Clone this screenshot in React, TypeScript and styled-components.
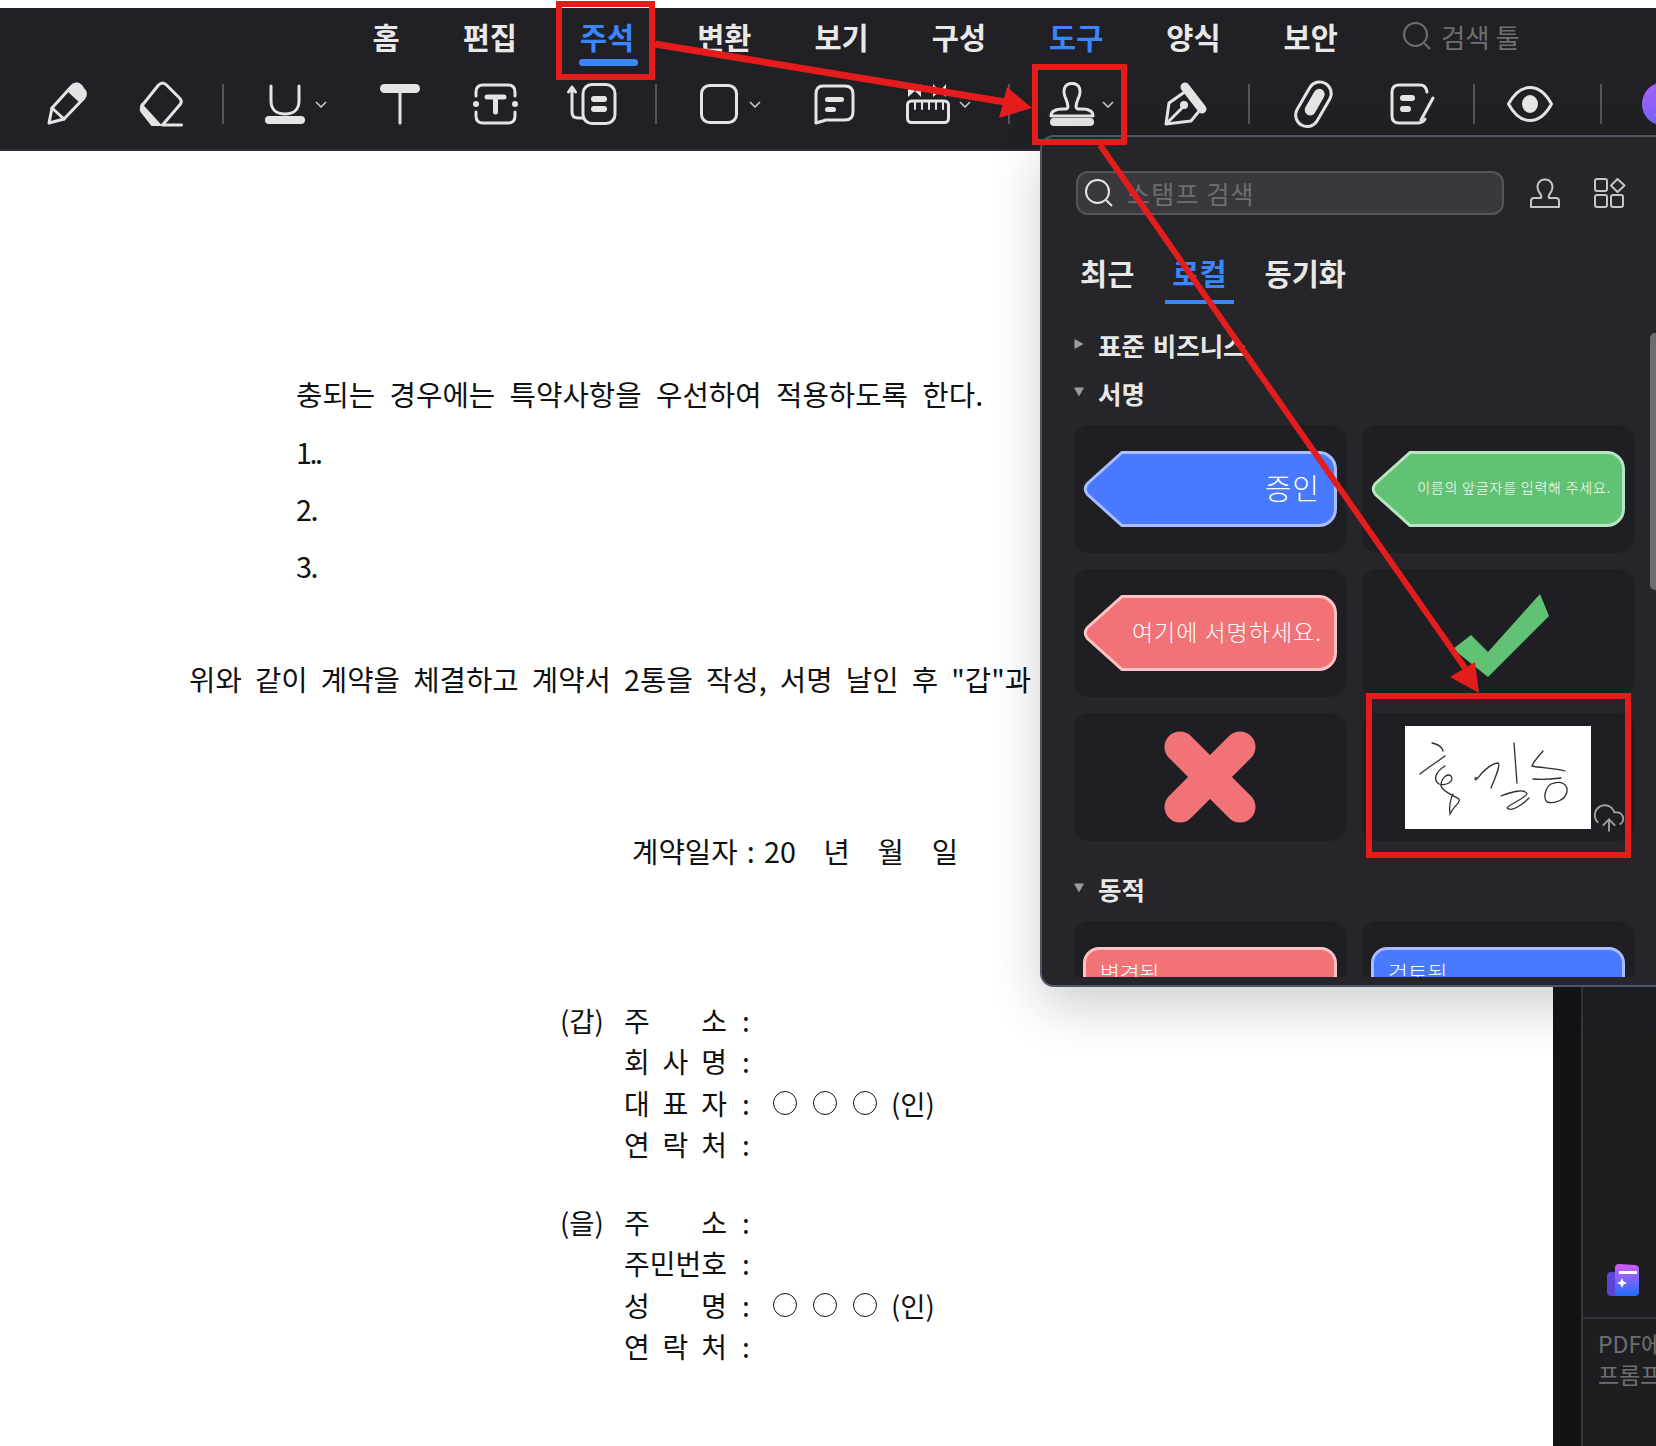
import React from 'react'
import styled, { createGlobalStyle } from 'styled-components'
import { CloudUpload } from 'lucide-react'

const GlobalStyle = createGlobalStyle`
  html, body {
    margin: 0;
    padding: 0;
    background: #fff;
  }
  * {
    box-sizing: border-box;
  }
`

const KR = `"Noto Sans CJK KR", "Noto Sans", sans-serif`
const ICON = '#e4e4e4'
const BLUE = '#3a86ff'
const RED = '#e41c1c'

const Page = styled.div`
  position: relative;
  width: 1656px;
  height: 1446px;
  padding-top: 8px;
  overflow: hidden;
  background: #fff;
  font-family: ${KR};
  display: flex;
  flex-direction: column;
`

/* top toolbar */

const Toolbar = styled.header`
  flex: none;
  height: 143px;
  background: #202025;
  border-bottom: 2px solid #2e2e33;
  color: #e6e6e6;
`

const TabRow = styled.nav`
  display: flex;
  align-items: center;
  gap: 63px;
  height: 58px;
  padding: 9px 0 11px 372.5px;
`

const MenuTab = styled.div<{ $active?: boolean; $line?: boolean }>`
  position: relative;
  font-size: 29.5px;
  line-height: 36px;
  font-weight: 700;
  color: ${(p) => (p.$active ? BLUE : '#e8e8e8')};

  &::after {
    content: '';
    display: ${(p) => (p.$line ? 'block' : 'none')};
    position: absolute;
    left: -1px;
    right: -4px;
    top: 41px;
    height: 7px;
    border-radius: 4px;
    background: ${BLUE};
  }
`

const ToolSearch = styled.div`
  display: flex;
  align-items: center;
  gap: 9px;
  margin-left: 1px;
  font-size: 26.5px;
  color: #6e6e72;
  svg {
    width: 30px;
    height: 30px;
  }
`

const ToolRow = styled.div`
  display: flex;
  align-items: center;
  height: 46px;
  margin-top: 15px;
  padding-left: 45px;
`

const Tool = styled.svg<{ $w: number; $h?: number; $gap?: number }>`
  flex: none;
  width: ${(p) => p.$w}px;
  height: ${(p) => p.$h ?? 42}px;
  margin-left: ${(p) => p.$gap ?? 0}px;
  overflow: visible;
  fill: none;
  stroke: ${ICON};
  stroke-width: 3;
  stroke-linecap: round;
  stroke-linejoin: round;
  .solid {
    fill: ${ICON};
    stroke: none;
  }
`

const Sep = styled.div<{ $gap: number }>`
  flex: none;
  width: 2px;
  height: 40px;
  margin-left: ${(p) => p.$gap}px;
  background: #55555a;
`

const Chevron = styled.svg<{ $gap: number }>`
  flex: none;
  width: 12px;
  height: 7px;
  margin-left: ${(p) => p.$gap}px;
  fill: none;
  stroke: #c9c9cc;
  stroke-width: 1.6;
`

const AiBadge = styled.div`
  flex: none;
  width: 44px;
  height: 44px;
  margin-left: 40px;
  border-radius: 50%;
  background: linear-gradient(135deg, #b05cf5, #4a6cf7);
  color: #fff;
  font-size: 26px;
  font-weight: 700;
  font-style: italic;
  line-height: 44px;
  text-align: center;
`

/* document area */

const Body = styled.main`
  flex: 1;
  min-height: 0;
  display: flex;
`

const Sheet = styled.section`
  flex: none;
  width: 1553px;
  padding-top: 223px;
  background: #fff;
  color: #111;
  overflow: hidden;
`

const DocLine = styled.p<{ $left: number; $top?: number; $spread?: number; $track?: number }>`
  margin: ${(p) => p.$top ?? 0}px 0 0 ${(p) => p.$left}px;
  height: 40px;
  font-size: 28.7px;
  line-height: 40px;
  white-space: pre;
  word-spacing: ${(p) => p.$spread ?? 6.7}px;
  letter-spacing: ${(p) => p.$track ?? 0}px;
`

const PartyBlock = styled.div<{ $top: number }>`
  margin: ${(p) => p.$top}px 0 0 560px;
`

const PartyRow = styled.div`
  display: grid;
  grid-template-columns: 64px 103px 46px auto;
  height: 41.3px;
  align-items: center;
  font-size: 28px;
  line-height: 41.3px;
`

const PartyTag = styled.span`
  font-size: 27.5px;
`

const PartyLabel = styled.span`
  display: flex;
  justify-content: space-between;
  white-space: nowrap;
`

const PartyColon = styled.span`
  padding-left: 15px;
`

const PartyValue = styled.span`
  display: flex;
  align-items: center;
  gap: 16px;
`

const Ring = styled.i`
  display: block;
  width: 24px;
  height: 24px;
  border: 1.5px solid #111;
  border-radius: 50%;
`

const Seal = styled.span`
  margin-left: -2px;
  font-size: 27.5px;
`

const Gutter = styled.div`
  flex: none;
  width: 28px;
  background: #131316;
`

const Sidebar = styled.aside`
  flex: 1;
  min-width: 0;
  display: flex;
  flex-direction: column;
  background: #1e1e21;
  border-left: 2px solid #36363b;
`

const SideTop = styled.div`
  flex: 1;
  display: flex;
  align-items: flex-end;
  padding: 0 0 21px 24px;
`

const SideInput = styled.div`
  flex: none;
  height: 129px;
  padding: 9px 0 0 15px;
  border-top: 2px solid #333338;
  color: #6e6e72;
  font-size: 23px;
  line-height: 31px;
  white-space: nowrap;
  overflow: hidden;
`

/* stamp dropdown */

const Panel = styled.div`
  position: absolute;
  left: 1040px;
  top: 135px;
  width: 640px;
  height: 852px;
  padding: 34px 0 0 32px;
  background: #25252a;
  border: 2px solid #4f5666;
  border-radius: 14px;
  box-shadow: 0 20px 50px rgba(20, 20, 40, 0.2);
  color: #e8e8e8;
`

const Scrollbar = styled.div`
  position: absolute;
  left: 608px;
  top: 196px;
  width: 10px;
  height: 257px;
  border-radius: 5px;
  background: #6c6c72;
`

const SearchRow = styled.div`
  display: flex;
  align-items: center;
  margin-left: 2px;
`

const SearchBox = styled.div`
  display: flex;
  align-items: center;
  gap: 13px;
  width: 428px;
  height: 44px;
  padding-left: 6px;
  background: #38383e;
  border: 2px solid #55555b;
  border-radius: 12px;
  color: #6d6d72;
  font-size: 25px;
  letter-spacing: 1.2px;
  svg {
    color: #e6e6e6;
    width: 30px;
    height: 30px;
  }
`

const HeadIcon = styled.svg<{ $w: number; $gap: number }>`
  width: ${(p) => p.$w}px;
  height: 30px;
  margin-left: ${(p) => p.$gap}px;
  fill: none;
  stroke: #c3c5cc;
  stroke-width: 2;
  stroke-linejoin: round;
`

const SourceTabs = styled.div`
  display: flex;
  gap: 38px;
  margin: 39px 0 0 6px;
`

const SourceTab = styled.div<{ $active?: boolean }>`
  position: relative;
  font-size: 29.5px;
  line-height: 36px;
  font-weight: 700;
  color: ${(p) => (p.$active ? BLUE : '#e8e8e8')};

  &::after {
    content: '';
    display: ${(p) => (p.$active ? 'block' : 'none')};
    position: absolute;
    left: -7px;
    right: -7px;
    top: 46px;
    height: 4px;
    background: ${BLUE};
  }
`

const StampList = styled.div`
  height: 656px;
  margin-top: 31px;
  overflow: hidden;
`

const SectionRow = styled.div<{ $top?: number }>`
  display: flex;
  align-items: center;
  gap: 14px;
  height: 48px;
  padding-bottom: 2px;
  margin-top: ${(p) => p.$top ?? 0}px;
  font-size: 25.5px;
  font-weight: 700;
  word-spacing: 2px;
`

const Caret = styled.i<{ $open?: boolean }>`
  display: block;
  flex: none;
  width: 10px;
  height: 10px;
  background: #9a9da8;
  clip-path: ${(p) =>
    p.$open ? 'polygon(0 5%, 100% 5%, 50% 95%)' : 'polygon(5% 0, 95% 50%, 5% 100%)'};
`

const CardGrid = styled.div`
  display: grid;
  grid-template-columns: 272px 272px;
  gap: 16px;
  margin-top: 8px;
`

const Card = styled.div`
  position: relative;
  display: flex;
  align-items: center;
  justify-content: center;
  height: 128px;
  border-radius: 16px;
  background: #1f1f23;
`

const TopCard = styled(Card)`
  align-items: flex-start;
  padding-top: 26px;
`

const Stamp = styled.div`
  display: grid;
  width: 254px;
  height: 76px;
  align-items: center;
  justify-items: end;
  & > * {
    grid-area: 1 / 1;
  }
  svg {
    width: 254px;
    height: 76px;
    display: block;
  }
`

const StampText = styled.span<{ $size: number; $right: number; $track?: number }>`
  position: relative;
  margin: 0 ${(p) => p.$right}px 4px 0;
  color: #fff;
  font-size: ${(p) => p.$size}px;
  font-weight: 300;
  letter-spacing: ${(p) => p.$track ?? 0}px;
  white-space: nowrap;
`

const CheckMark = styled.svg`
  margin: 6px 0 0 6px;
`

const DynamicStamp = styled.div<{ $fill: string; $edge: string }>`
  width: 254px;
  height: 76px;
  padding: 8px 0 0 14px;
  border: 3px solid ${(p) => p.$edge};
  border-radius: 16px;
  background: ${(p) => p.$fill};
  color: #fff;
  font-size: 21.5px;
  font-weight: 300;
  line-height: 30px;
`

const SignaturePic = styled.div`
  width: 186px;
  height: 103px;
  background: #fff;
  svg {
    display: block;
    fill: none;
    stroke: #2e2e2e;
    stroke-width: 1.3;
    stroke-linecap: round;
  }
`

const UploadBadge = styled.div`
  position: absolute;
  right: 8px;
  bottom: 6px;
  display: flex;
  color: #a2a2a7;
`

/* red annotations on top of the screenshot */

const Annotations = styled.svg`
  position: absolute;
  left: 0;
  top: 0;
  width: 1656px;
  height: 1446px;
  pointer-events: none;
  fill: none;
  stroke: ${RED};
  stroke-width: 6;
  polygon {
    fill: ${RED};
    stroke: none;
  }
`

const StampShape = ({ fill, edge }: { fill: string; edge: string }) => (
  <svg viewBox="0 0 254 76">
    <path
      d="M39 1.5 H236 A16.5 16.5 0 0 1 252.5 18 V58 A16.5 16.5 0 0 1 236 74.5 H39 L4.5 43.5 Q0 38 4.5 32.5 Z"
      fill={fill}
      stroke={edge}
      strokeWidth="3"
    />
  </svg>
)

const Down = ({ gap }: { gap: number }) => (
  <Chevron $gap={gap} viewBox="0 0 12 7">
    <path d="M1 1 L6 6 L11 1" />
  </Chevron>
)

const Magnifier = () => (
  <svg viewBox="0 0 30 30" width="28" height="28" fill="none" stroke="currentColor" strokeWidth="2">
    <circle cx="13.5" cy="13.5" r="11.5" />
    <path d="M22 22 L28 28" />
  </svg>
)

const Party = ({
  tag,
  label,
  named,
}: {
  tag?: string
  label: string[]
  named?: boolean
}) => (
  <PartyRow>
    <PartyTag>{tag}</PartyTag>
    <PartyLabel>
      {label.map((c, i) => (
        <span key={i}>{c}</span>
      ))}
    </PartyLabel>
    <PartyColon>:</PartyColon>
    {named && (
      <PartyValue>
        <Ring />
        <Ring />
        <Ring />
        <Seal>(인)</Seal>
      </PartyValue>
    )}
  </PartyRow>
)

export default function App() {
  return (
    <Page>
      <GlobalStyle />
      <Toolbar>
        <TabRow>
          <MenuTab>홈</MenuTab>
          <MenuTab>편집</MenuTab>
          <MenuTab $active $line>
            주석
          </MenuTab>
          <MenuTab>변환</MenuTab>
          <MenuTab>보기</MenuTab>
          <MenuTab>구성</MenuTab>
          <MenuTab $active>도구</MenuTab>
          <MenuTab>양식</MenuTab>
          <MenuTab>보안</MenuTab>
          <ToolSearch>
            <Magnifier />
            검색 툴
          </ToolSearch>
        </TabRow>
        <ToolRow>
          <Tool $w={42} viewBox="0 0 40 42">
            <path d="M3 40 L6 25 L25 4 C28 0 32 0 35 3 L37 6 C40 9 40 12 38 15 L18 36 Z" />
            <path className="solid" d="M25 4 C28 0 32 0 35 3 L37 6 C40 9 40 12 38 15 L34 20 L21 8 Z" />
            <path d="M6 25 L18 36" />
          </Tool>
          <Tool $w={45} $h={45} $gap={51} viewBox="0 0 44 45">
            <path d="M4 23 L20 3 Q24 -1 28 3 L41 16 Q44 19 42 22 L24 43 H43" />
            <path className="solid" d="M3 21 L24 44 H13 L2 30 Q0 25 3 21 Z" />
          </Tool>
          <Sep $gap={39} />
          <Tool $w={40} $h={40} $gap={41} viewBox="0 0 40 40">
            <path d="M6 2 V17 C6 26 12 30 20 30 C28 30 34 26 34 17 V2" />
            <rect className="solid" x="0" y="32" width="40" height="8" rx="4" />
          </Tool>
          <Down gap={10} />
          <Tool $w={40} $h={40} $gap={53} viewBox="0 0 40 40">
            <rect className="solid" x="0" y="0" width="40" height="9" rx="4.5" />
            <path d="M20 8 V39" />
          </Tool>
          <Tool $w={45} $gap={53} viewBox="0 0 45 42">
            <path d="M3 13 V9 Q3 2 10 2 H35 Q42 2 42 9 V13" />
            <path d="M3 29 V33 Q3 40 10 40 H35 Q42 40 42 33 V29" />
            <circle className="solid" cx="3" cy="21" r="3" />
            <circle className="solid" cx="42" cy="21" r="3" />
            <path d="M14 14 H31 M22.5 14 V29" strokeWidth="5" />
          </Tool>
          <Tool $w={48} $gap={50} viewBox="0 0 48 42">
            <rect x="15" y="1.5" width="32" height="39" rx="9" />
            <rect className="solid" x="23" y="13" width="16" height="6" rx="3" />
            <rect className="solid" x="23" y="23" width="16" height="6" rx="3" />
            <path d="M15 35 H10 Q4 35 4 29 V5 M0.5 9 L4 4 L7.5 9" />
          </Tool>
          <Sep $gap={39} />
          <Tool $w={38} $h={40} $gap={43} viewBox="0 0 38 40">
            <rect x="1.5" y="1.5" width="35" height="37" rx="8" />
          </Tool>
          <Down gap={11} />
          <Tool $w={42} $h={40} $gap={52} viewBox="0 0 42 40">
            <path d="M10 2 H32 Q40 2 40 10 V28 Q40 36 32 36 H13 L3 39 V10 Q3 2 10 2 Z" />
            <rect className="solid" x="12" y="13" width="19" height="5" rx="2.5" />
            <rect className="solid" x="12" y="23" width="11" height="5" rx="2.5" />
          </Tool>
          <Tool $w={44} $h={40} $gap={51} viewBox="0 0 44 40">
            <rect x="1.5" y="17" width="41" height="21.5" rx="4" />
            <path d="M9 18 V25 M16 18 V25 M23 18 V25 M30 18 V25 M37 18 V25" strokeWidth="2" />
            <polygon className="solid" points="2,0 9,7 2,13" />
            <polygon className="solid" points="15,0 9,7 15,13" />
            <polygon className="solid" points="27,0 34,7 27,13" />
            <polygon className="solid" points="40,0 34,7 40,13" />
          </Tool>
          <Down gap={9} />
          <Sep $gap={37} />
          <Tool $w={46} $h={44} $gap={39} viewBox="0 0 46 44">
            <path d="M14 27 H17 C20 27 19 22 17 17 C13 9 15 1.5 23 1.5 C31 1.5 33 9 29 17 C27 22 26 27 29 27 H33 C40 27 44 29 44 34 H2 C2 29 7 27 14 27 Z" />
            <rect className="solid" x="1" y="36" width="44" height="8" rx="4" />
          </Tool>
          <Down gap={7} />
          <Tool $w={44} $h={44} $gap={50} viewBox="0 0 44 44">
            <path d="M2 42 L5 21 L22 9 L36 28 L27 39 Z" />
            <path d="M21 5 L38 27" strokeWidth="9" />
            <circle className="solid" cx="20" cy="23" r="4" />
            <path d="M3 41 L19 25" />
          </Tool>
          <Sep $gap={40} />
          <Tool $w={41} $h={44} $gap={43} viewBox="0 0 41 44">
            <g transform="rotate(30 20 22)">
              <rect x="9" y="-2" width="23" height="48" rx="11.5" />
              <rect className="solid" x="15" y="5" width="11" height="29" rx="5.5" />
            </g>
          </Tool>
          <Tool $w={44} $h={42} $gap={56} viewBox="0 0 44 42">
            <path d="M30 2 H9 Q2 2 2 9 V33 Q2 40 9 40 H27 Q33 40 35 36 M30 2 Q36 2 37 9" />
            <rect className="solid" x="10" y="12" width="15" height="6" rx="3" />
            <rect className="solid" x="10" y="23" width="11" height="6" rx="3" />
            <path d="M43 15 L31 37" />
          </Tool>
          <Sep $gap={39} />
          <Tool $w={46} $h={36} $gap={32} viewBox="0 0 46 36">
            <path d="M1.5 18 C8 6 15 1.5 23 1.5 C31 1.5 38 6 44.5 18 C38 30 31 34.5 23 34.5 C15 34.5 8 30 1.5 18 Z" />
            <ellipse className="solid" cx="23" cy="18" rx="8" ry="9" />
          </Tool>
          <Sep $gap={47} />
          <AiBadge>A</AiBadge>
        </ToolRow>
      </Toolbar>

      <Body>
        <Sheet>
          <DocLine $left={296} $spread={8}>
            충되는 경우에는 특약사항을 우선하여 적용하도록 한다.
          </DocLine>
          <DocLine $left={296} $top={18} $track={-2.5}>
            1..
          </DocLine>
          <DocLine $left={296} $top={17} $track={-1.5}>
            2.
          </DocLine>
          <DocLine $left={296} $top={17} $track={-1.5}>
            3.
          </DocLine>
          <DocLine $left={189} $top={73}>
            위와 같이 계약을 체결하고 계약서 2통을 작성, 서명 날인 후 "갑"과 "을"이 각 1통씩 보관한다.
          </DocLine>
          <DocLine $left={632} $top={132} $spread={2.8}>
            계약일자 : 20   년   월   일
          </DocLine>
          <PartyBlock $top={129}>
            <Party tag="(갑)" label={['주', '소']} />
            <Party label={['회', '사', '명']} />
            <Party label={['대', '표', '자']} named />
            <Party label={['연', '락', '처']} />
          </PartyBlock>
          <PartyBlock $top={37}>
            <Party tag="(을)" label={['주', '소']} />
            <Party label={['주민번호']} />
            <Party label={['성', '명']} named />
            <Party label={['연', '락', '처']} />
          </PartyBlock>
        </Sheet>
        <Gutter />
        <Sidebar>
          <SideTop>
            <svg width="32" height="32" viewBox="0 0 32 32">
              <defs>
                <linearGradient id="bookFront" x1="0" y1="0" x2="0" y2="1">
                  <stop offset="0" stopColor="#d45cf5" />
                  <stop offset="1" stopColor="#1f6cff" />
                </linearGradient>
              </defs>
              <rect x="0" y="8" width="18" height="24" rx="4" fill="#5a45d8" />
              <path d="M8 4 Q8 0 12 0 L28 1 Q32 1.5 32 5 V28 Q32 32 28 32 H8 Z" fill="url(#bookFront)" />
              <rect x="12" y="7" width="18" height="3" fill="#fff" />
              <path d="M15 14 L16.5 17.5 L20 19 L16.5 20.5 L15 24 L13.5 20.5 L10 19 L13.5 17.5 Z" fill="#fff" />
            </svg>
          </SideTop>
          <SideInput>
            PDF에 대해
            <br />
            프롬프트
          </SideInput>
        </Sidebar>
      </Body>

      <Panel>
        <SearchRow>
          <SearchBox>
            <Magnifier />
            스탬프 검색
          </SearchBox>
          <HeadIcon $w={30} $gap={26} viewBox="0 0 30 30">
            <path d="M11 20 C12.5 18 10 16 8.5 13 C6 7 9 1.5 15 1.5 C21 1.5 24 7 21.5 13 C20 16 17.5 18 19 20 H26 Q29 20 29 23 V29 H1 V23 Q1 20 4 20 Z" />
          </HeadIcon>
          <HeadIcon $w={32} $gap={34} viewBox="0 0 32 30">
            <rect x="1" y="1" width="12" height="12" rx="2" />
            <rect x="1" y="17" width="12" height="12" rx="2" />
            <rect x="17" y="17" width="12" height="12" rx="2" />
            <path d="M23.5 1 L30.5 7.5 L23.5 14 L17 7.5 Z" />
          </HeadIcon>
        </SearchRow>
        <SourceTabs>
          <SourceTab>최근</SourceTab>
          <SourceTab $active>로컬</SourceTab>
          <SourceTab>동기화</SourceTab>
        </SourceTabs>
        <StampList>
          <SectionRow>
            <Caret />
            표준 비즈니스
          </SectionRow>
          <SectionRow>
            <Caret $open />
            서명
          </SectionRow>
          <CardGrid>
            <Card>
              <Stamp>
                <StampShape fill="#4879ff" edge="#a9bdff" />
                <StampText $size={29} $right={17} $track={1}>
                  증인
                </StampText>
              </Stamp>
            </Card>
            <Card>
              <Stamp>
                <StampShape fill="#62c273" edge="#b7e5bf" />
                <StampText $size={14} $right={14} $track={0.8}>
                  이름의 앞글자를 입력해 주세요.
                </StampText>
              </Stamp>
            </Card>
            <Card>
              <Stamp>
                <StampShape fill="#f27377" edge="#fbc3c4" />
                <StampText $size={23} $right={15} $track={1}>
                  여기에 서명하세요.
                </StampText>
              </Stamp>
            </Card>
            <Card>
              <CheckMark width="96" height="84" viewBox="0 0 96 84">
                <polygon points="87,0 96,22 35,83 0,55 18,41 35,58" fill="#62c273" />
              </CheckMark>
            </Card>
            <Card>
              <svg width="92" height="92" viewBox="0 0 92 92">
                <path d="M16 16 L76 76 M76 16 L16 76" stroke="#f27377" strokeWidth="31" strokeLinecap="round" />
              </svg>
            </Card>
            <Card>
              <SignaturePic>
                <svg width="186" height="103" viewBox="0 0 186 103">
                  <path d="M27 17 C32 18 37 21 38 25" />
                  <path d="M40 30 C32 36 22 42 15 48" />
                  <path d="M40 40 C30 46 28 54 34 58 C40 60 50 56 46 50 C42 47 36 52 36 60 C38 66 46 68 54 73 C56 77 50 78 45 88 C44 80 45 74 48 68" />
                  <path d="M72 52 C69 50 70 56 72 53 C78 44 88 37 93 37 C96 39 90 52 86 62" />
                  <path d="M109 17 C110 30 111 44 112 57" />
                  <path d="M96 70 C106 66 120 62 122 68 C118 74 104 78 102 82 C106 86 116 80 124 72" />
                  <path d="M138 25 C134 30 128 36 127 40 C136 42 150 42 160 45" />
                  <path d="M128 53 C138 54 148 53 156 52" />
                  <path d="M146 58 C140 62 138 72 142 76 C150 78 160 74 162 66 C163 58 156 54 146 58" />
                </svg>
              </SignaturePic>
              <UploadBadge>
                <CloudUpload size={34} strokeWidth={1.3} />
              </UploadBadge>
            </Card>
          </CardGrid>
          <SectionRow $top={24}>
            <Caret $open />
            동적
          </SectionRow>
          <CardGrid>
            <TopCard>
              <DynamicStamp $fill="#f27377" $edge="#fbc3c4">
                변경됨
              </DynamicStamp>
            </TopCard>
            <TopCard>
              <DynamicStamp $fill="#4879ff" $edge="#a9bdff">
                검토됨
              </DynamicStamp>
            </TopCard>
          </CardGrid>
        </StampList>
        <Scrollbar />
      </Panel>

      <Annotations viewBox="0 0 1656 1446">
        <rect x="559" y="4" width="93" height="73" />
        <rect x="1035" y="67" width="89" height="75" />
        <rect x="1369" y="696" width="259" height="159" />
        <path d="M655 44 L1005 102" strokeWidth="7" />
        <polygon points="1032,108 999,118 1007,87" />
        <path d="M1100 145 L1465 668" strokeWidth="6" />
        <polygon points="1479,693 1450,677 1475,662" />
      </Annotations>
    </Page>
  )
}
